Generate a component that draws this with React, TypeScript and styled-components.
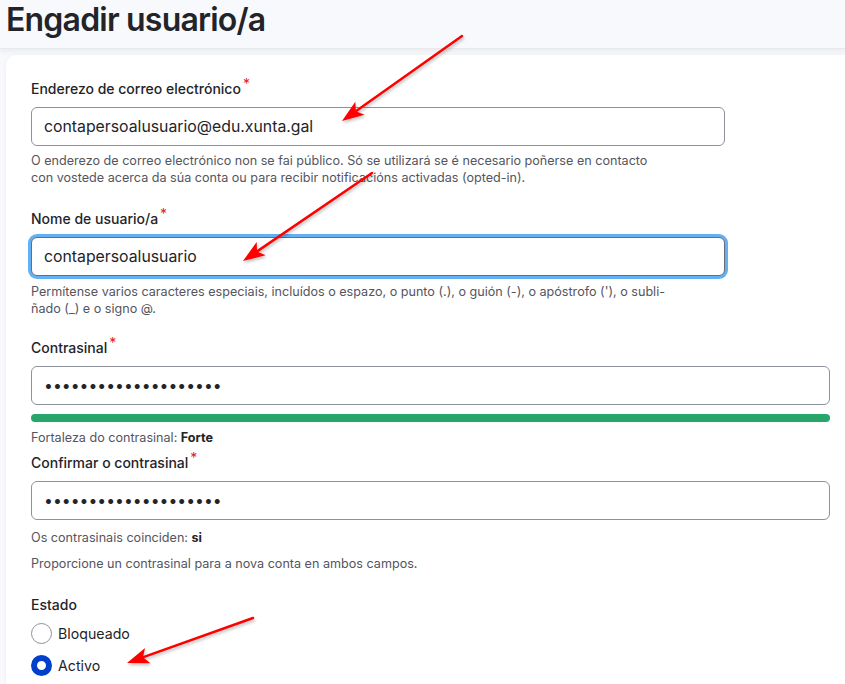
import React from "react";
import styled, { createGlobalStyle } from "styled-components";

const GlobalStyle = createGlobalStyle`
  html, body {
    margin: 0;
    padding: 0;
    background: #f8f9fc;
    overflow: hidden;
  }
  body {
    font-family: Inter, "Noto Sans", "Liberation Sans", sans-serif;
    color: #232429;
  }
  * {
    box-sizing: border-box;
  }
`;

const Page = styled.div`
  position: relative;
  width: 845px;
  height: 684px;
  overflow: hidden;
`;

const Header = styled.header`
  height: 49px;
  padding: 0 6px;
  background: #f8f9fc;
  border-bottom: 1px solid #e8e9ed;
  box-shadow: 0 3px 5px rgba(0, 0, 0, 0.05);
`;

const Title = styled.h1`
  margin: 0;
  font-size: 32px;
  line-height: 40px;
  font-weight: 600;
  letter-spacing: -0.025em;
  color: #232429;
`;

const Card = styled.main`
  width: 849px;
  margin: 6px 0 0 6px;
  padding: 25px 25px 0 25px;
  background: #fff;
  border-radius: 10px 0 0 0;
  box-shadow: 0 1px 4px rgba(0, 0, 0, 0.06);
  min-height: 640px;
`;

const FormItem = styled.div<{ $mt?: number }>`
  margin-top: ${(p) => p.$mt ?? 0}px;
`;

const Label = styled.label`
  display: block;
  font-size: 14px;
  line-height: 18px;
  height: 18px;
  font-weight: 500;
  margin-bottom: 9px;
`;

const Required = styled.span`
  position: relative;
  top: -5px;
  margin-left: 2px;
  line-height: 0;
  color: #dc2323;
  font-size: 14px;
  font-weight: 400;
`;

const Input = styled.input<{ $wide?: boolean; $focused?: boolean }>`
  display: block;
  width: ${(p) => (p.$wide ? "799px" : "694px")};
  height: 39px;
  padding: 0 12px;
  border: 1px solid ${(p) => (p.$focused ? "#6b6d75" : "#8e929c")};
  border-radius: 6px;
  background: #fff;
  font-family: Inter, "Noto Sans", sans-serif;
  font-size: 15.8px;
  color: #232429;
  outline: none;
  box-shadow: ${(p) => (p.$focused ? "0 0 0 3px #64b0f4" : "none")};
`;

const Description = styled.div<{ $mt?: number }>`
  margin-top: ${(p) => p.$mt ?? 6}px;
  font-size: 12.6px;
  line-height: 17px;
  color: #545560;

  b {
    color: #232429;
    font-weight: 700;
  }
`;

const StrengthBar = styled.div`
  margin-top: 9px;
  width: 799px;
  height: 8px;
  border-radius: 4px;
  background: #26a769;
`;

const Radios = styled.div`
  display: flex;
  flex-direction: column;
  gap: 11px;
  margin-top: 1px;
`;

const RadioRow = styled.div`
  display: flex;
  align-items: center;
  gap: 6px;
  height: 21px;
  font-size: 14.2px;
`;

const RadioCircle = styled.span<{ $checked?: boolean }>`
  width: 21px;
  height: 21px;
  border-radius: 50%;
  background: #fff;
  border: ${(p) => (p.$checked ? "6px solid #003ecc" : "1px solid #8e929c")};
`;

const Overlay = styled.svg`
  position: absolute;
  top: 0;
  left: 0;
  pointer-events: none;
`;

type ArrowProps = { x1: number; y1: number; x2: number; y2: number };

const Arrow: React.FC<ArrowProps> = ({ x1, y1, x2, y2 }) => {
  const dx = x2 - x1;
  const dy = y2 - y1;
  const len = Math.hypot(dx, dy);
  const ux = dx / len;
  const uy = dy / len;
  const head = 22;
  const half = 8;
  const bx = x2 - ux * head;
  const by = y2 - uy * head;
  const nx = -uy * half;
  const ny = ux * half;
  return (
    <g filter="url(#arrowShadow)">
      <line
        x1={x1}
        y1={y1}
        x2={x2 - ux * 10}
        y2={y2 - uy * 10}
        stroke="#ff0000"
        strokeWidth={2.5}
        strokeLinecap="round"
      />
      <polygon
        points={`${x2},${y2} ${bx + nx},${by + ny} ${x2 - ux * 17},${y2 - uy * 17} ${bx - nx},${by - ny}`}
        fill="#ff0000"
      />
    </g>
  );
};

const App: React.FC = () => {
  return (
    <Page>
      <GlobalStyle />
      <Header>
        <Title>Engadir usuario/a</Title>
      </Header>
      <Card>
        <FormItem>
          <Label>
            Enderezo de correo electrónico<Required>*</Required>
          </Label>
          <Input readOnly value="contapersoalusuario@edu.xunta.gal" />
          <Description>
            O enderezo de correo electrónico non se fai público. Só se utilizará se é necesario poñerse en contacto
            <br />
            con vostede acerca da súa conta ou para recibir notificacións activadas (opted-in).
          </Description>
        </FormItem>

        <FormItem $mt={24}>
          <Label>
            Nome de usuario/a<Required>*</Required>
          </Label>
          <Input readOnly $focused value="contapersoalusuario" />
          <Description $mt={7}>
            Permítense varios caracteres especiais, incluídos o espazo, o punto (.), o guión (-), o apóstrofo ('), o subli-
            <br />
            ñado (_) e o signo @.
          </Description>
        </FormItem>

        <FormItem $mt={22}>
          <Label>
            Contrasinal<Required>*</Required>
          </Label>
          <Input readOnly $wide type="password" value="contrasinal-forte-20" />
          <StrengthBar />
          <Description $mt={7}>
            Fortaleza do contrasinal: <b>Forte</b>
          </Description>
        </FormItem>

        <FormItem $mt={8}>
          <Label>
            Confirmar o contrasinal<Required>*</Required>
          </Label>
          <Input readOnly $wide type="password" value="contrasinal-forte-20" />
          <Description $mt={9}>
            Os contrasinais coinciden: <b>si</b>
          </Description>
          <Description $mt={9}>
            Proporcione un contrasinal para a nova conta en ambos campos.
          </Description>
        </FormItem>

        <FormItem $mt={24}>
          <Label>Estado</Label>
          <Radios>
            <RadioRow>
              <RadioCircle />
              Bloqueado
            </RadioRow>
            <RadioRow>
              <RadioCircle $checked />
              Activo
            </RadioRow>
          </Radios>
        </FormItem>
      </Card>

      <Overlay width={845} height={684} viewBox="0 0 845 684">
        <defs>
          <filter id="arrowShadow" x="-20%" y="-20%" width="140%" height="140%">
            <feDropShadow dx="1" dy="2" stdDeviation="1.5" floodColor="#000" floodOpacity="0.25" />
          </filter>
        </defs>
        <Arrow x1={462} y1={36} x2={342} y2={121} />
        <Arrow x1={372} y1={173} x2={243} y2={261} />
        <Arrow x1={253} y1={618} x2={127} y2={663} />
      </Overlay>
    </Page>
  );
};

export default App;
